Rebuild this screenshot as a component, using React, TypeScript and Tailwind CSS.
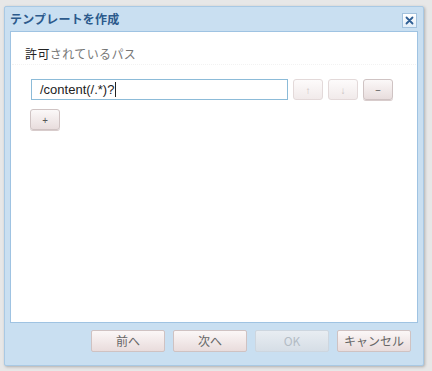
import React from 'react';

const jp = { fontFamily: '"Noto Sans CJK JP", "Noto Sans", sans-serif' };

function SmallButton({ label, disabled }: { label: string; disabled?: boolean }) {
  return (
    <button
      className={
        disabled
          ? 'w-[30px] h-[21px] rounded-[3px] border border-[#e3d9d9] bg-gradient-to-b from-[#fdfbfb] to-[#f1eaea] text-[10px] leading-none text-[#c9c0c0] flex items-center justify-center'
          : 'w-[30px] h-[21px] rounded-[3px] border border-[#cfc3c3] bg-gradient-to-b from-[#fbf8f8] to-[#e8dddd] text-[10px] leading-none text-[#555] flex items-center justify-center shadow-[0_1px_0_#d8cccc]'
      }
    >
      {label}
    </button>
  );
}

function FooterButton({ label, disabled }: { label: string; disabled?: boolean }) {
  return (
    <button
      style={jp}
      className={
        disabled
          ? 'w-[74px] h-[22px] rounded-[2px] border border-[#cdd6df] bg-gradient-to-b from-[#e8edf2] to-[#d6dee6] text-[12px] text-[#b3bcc5] flex items-center justify-center'
          : 'w-[74px] h-[22px] rounded-[2px] border border-[#cfc2c2] bg-gradient-to-b from-[#fbf7f7] to-[#e9dcdc] text-[12px] text-[#666] flex items-center justify-center'
      }
    >
      {label}
    </button>
  );
}

export default function App() {
  return (
    <div className="w-[432px] h-[371px] bg-[#e7e7e7] pt-[6px] pl-[4px] overflow-hidden">
      <div className="w-[420px] h-[360px] rounded-[2px] border border-[#a9c9e4] bg-[#c9dff1] flex flex-col shadow-[1px_1px_3px_rgba(0,0,0,0.25)]">
        {/* Title bar */}
        <div className="h-[24px] flex items-center justify-between pl-[5px] pr-[6px]">
          <span style={jp} className="text-[12px] font-bold text-[#2c5a8c] tracking-[0.2px]">
            テンプレートを作成
          </span>
          <button className="w-[15px] h-[15px] mt-[2px] border border-[#a3c2dd] bg-gradient-to-b from-[#ffffff] to-[#e3eef8] flex items-center justify-center">
            <svg width="9" height="9" viewBox="0 0 9 9">
              <path d="M1.5 1.5 L7.5 7.5 M7.5 1.5 L1.5 7.5" stroke="#2f5f94" strokeWidth="1.8" strokeLinecap="round" />
            </svg>
          </button>
        </div>

        {/* Content panel */}
        <div className="mx-[5px] h-[292px] border border-[#9fc3e2] bg-white flex flex-col">
          <div className="pl-[13px] pt-[9px] h-[33px] border-b border-dotted border-[#f2f2f2] mx-[1px]">
            <span style={jp} className="text-[12px] tracking-[0.4px]">
              <span className="text-[#222]">許可</span>
              <span className="text-[#777]">されているパス</span>
            </span>
          </div>
          <div className="pl-[20px] pt-[14px] flex gap-[5px]">
            <div className="w-[257px] h-[21px] border border-[#8cbbd8] flex items-center pl-[8px]">
              <span style={{ fontFamily: '"Liberation Sans", sans-serif' }} className="text-[13px] text-[#222]">
                /content(/.*)?
              </span>
              <span className="w-px h-[15px] bg-[#222] ml-[1px]" />
            </div>
            <div className="flex gap-[5px]">
              <SmallButton label="↑" disabled />
              <SmallButton label="↓" disabled />
              <SmallButton label="−" />
            </div>
          </div>
          <div className="pl-[19px] pt-[9px]">
            <SmallButton label="+" />
          </div>
        </div>

        {/* Footer */}
        <div className="flex justify-end gap-[8px] pr-[12px] pt-[7px]">
          <FooterButton label="前へ" />
          <FooterButton label="次へ" />
          <FooterButton label="OK" disabled />
          <FooterButton label="キャンセル" />
        </div>
      </div>
    </div>
  );
}
